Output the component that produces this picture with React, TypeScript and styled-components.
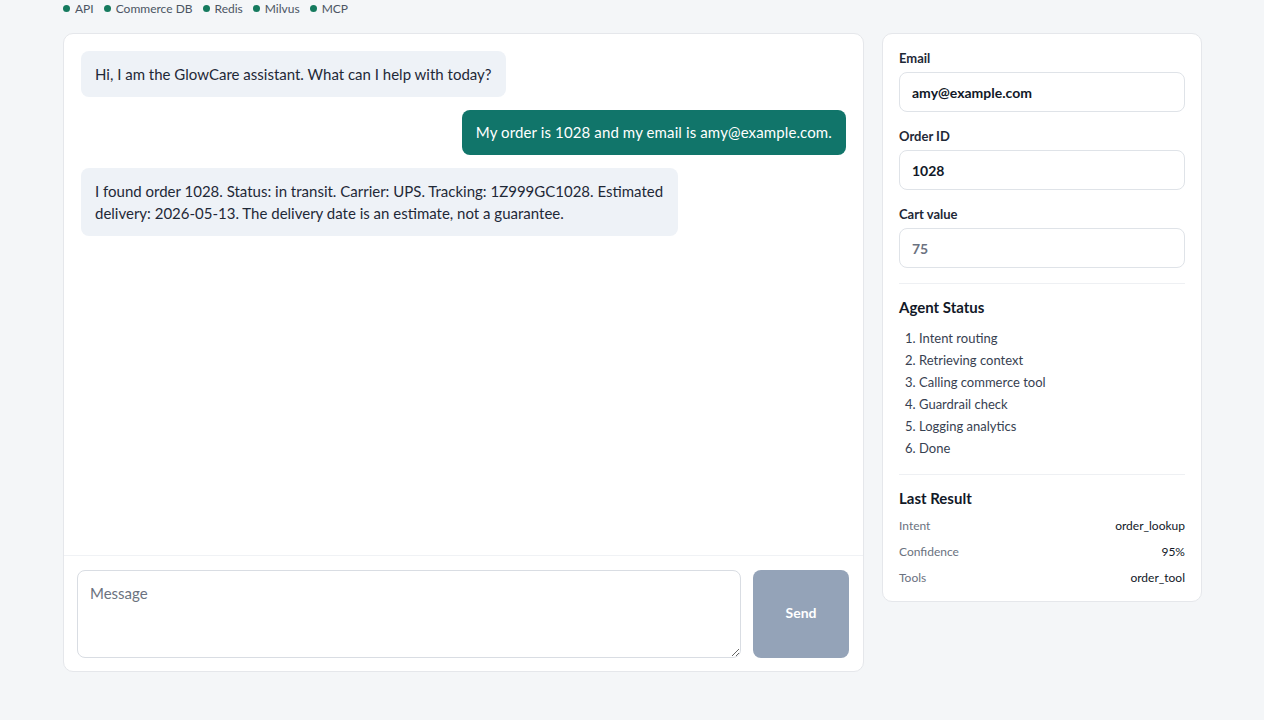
import React from "react";
import styled, { createGlobalStyle } from "styled-components";

const GlobalStyle = createGlobalStyle`
	html, body {
		margin: 0;
		padding: 0;
		background: #f4f6f8;
	}
	body {
		font-family: Lato, "Liberation Sans", sans-serif;
		color: #1f2937;
	}
	* {
		box-sizing: border-box;
	}
`;

const Page = styled.div`
	width: 1139px;
	margin: 0 62px 0 63px;
	padding-bottom: 48px;
`;

const ServiceBar = styled.div`
	display: flex;
	align-items: center;
	gap: 10px;
	height: 17px;
	margin-bottom: 16px;
`;

const Service = styled.span`
	display: flex;
	align-items: center;
	gap: 5px;
	font-size: 12px;
	color: #4b5563;
	&::before {
		content: "";
		width: 7px;
		height: 7px;
		border-radius: 50%;
		background: #157a5e;
	}
`;

const Layout = styled.div`
	display: grid;
	grid-template-columns: 1fr 320px;
	gap: 18px;
	align-items: start;
`;

const Card = styled.section`
	background: #fff;
	border: 1px solid #e5e7eb;
	border-radius: 10px;
`;

const ChatCard = styled(Card)`
	display: flex;
	flex-direction: column;
	height: 639px;
`;

const Messages = styled.div`
	flex: 1;
	display: flex;
	flex-direction: column;
	gap: 13px;
	padding: 17px;
`;

const Bubble = styled.div<{ $mine?: boolean }>`
	align-self: ${(p) => (p.$mine ? "flex-end" : "flex-start")};
	max-width: 78%;
	padding: 11.5px 14px;
	border-radius: 8px;
	font-size: 15px;
	line-height: 22.5px;
	letter-spacing: ${(p) => (p.$mine ? "0.12px" : "0")};
	background: ${(p) => (p.$mine ? "#11756a" : "#eef2f7")};
	color: ${(p) => (p.$mine ? "#fff" : "#1f2937")};
`;

const Composer = styled.div`
	display: flex;
	gap: 12px;
	padding: 14px 14px 13px 13px;
	border-top: 1px solid #f0f2f5;
`;

const MessageInput = styled.textarea`
	flex: 1;
	height: 88px;
	resize: vertical;
	padding: 12px;
	border: 1px solid #d9dde3;
	border-radius: 8px;
	font-family: inherit;
	font-size: 15px;
	line-height: 20px;
	color: #1f2937;
	&::placeholder {
		color: #6b7280;
	}
`;

const SendButton = styled.button`
	width: 96px;
	height: 88px;
	padding: 0 0 3px;
	border: none;
	border-radius: 8px;
	background: #94a3b8;
	color: #fff;
	font-family: inherit;
	font-size: 14px;
	font-weight: 700;
	cursor: not-allowed;
`;

const SidePanel = styled(Card)`
	padding: 16px 16px 11px;
`;

const Field = styled.label`
	display: flex;
	flex-direction: column;
	gap: 6px;
	margin-bottom: 16px;
	font-size: 13px;
	line-height: 16px;
	font-weight: 700;
	color: #1f2937;
	&:last-of-type {
		margin-bottom: 15px;
	}
`;

const TextInput = styled.input<{ $muted?: boolean }>`
	height: 40px;
	padding: 0 12px;
	border: 1px solid #dfe3e8;
	border-radius: 8px;
	font-family: inherit;
	font-size: 14px;
	font-weight: 700;
	color: ${(p) => (p.$muted ? "#6b7280" : "#111827")};
`;

const Divider = styled.hr`
	border: none;
	border-top: 1px solid #eef0f3;
	margin: 0 0 14px;
`;

const Heading = styled.h3<{ $gap: number }>`
	margin: 0 0 ${(p) => p.$gap}px;
	font-size: 15px;
	line-height: 18px;
	font-weight: 700;
	color: #111827;
`;

const Steps = styled.ol`
	margin: 0 0 15px;
	padding-left: 20px;
	font-size: 13px;
	line-height: 22px;
	color: #374151;
`;

const ResultRow = styled.div`
	display: flex;
	justify-content: space-between;
	align-items: center;
	height: 26px;
	font-size: 12px;
`;

const ResultKey = styled.span`
	color: #6b7280;
`;

const ResultValue = styled.span`
	color: #111827;
`;

const services = ["API", "Commerce DB", "Redis", "Milvus", "MCP"];

const steps = [
	"Intent routing",
	"Retrieving context",
	"Calling commerce tool",
	"Guardrail check",
	"Logging analytics",
	"Done",
];

const results = [
	["Intent", "order_lookup"],
	["Confidence", "95%"],
	["Tools", "order_tool"],
];

export default function App() {
	return (
		<>
			<GlobalStyle />
			<Page>
				<ServiceBar>
					{services.map((s) => (
						<Service key={s}>{s}</Service>
					))}
				</ServiceBar>
				<Layout>
					<ChatCard>
						<Messages>
							<Bubble>Hi, I am the GlowCare assistant. What can I help with today?</Bubble>
							<Bubble $mine>My order is 1028 and my email is amy@example.com.</Bubble>
							<Bubble>
								I found order 1028. Status: in transit. Carrier: UPS. Tracking: 1Z999GC1028. Estimated
								delivery: 2026-05-13. The delivery date is an estimate, not a guarantee.
							</Bubble>
						</Messages>
						<Composer>
							<MessageInput placeholder='Message' />
							<SendButton disabled>Send</SendButton>
						</Composer>
					</ChatCard>
					<SidePanel>
						<Field>
							Email
							<TextInput defaultValue='amy@example.com' />
						</Field>
						<Field>
							Order ID
							<TextInput defaultValue='1028' />
						</Field>
						<Field>
							Cart value
							<TextInput $muted defaultValue='75' />
						</Field>
						<Divider />
						<Heading $gap={11}>Agent Status</Heading>
						<Steps>
							{steps.map((s) => (
								<li key={s}>{s}</li>
							))}
						</Steps>
						<Divider />
						<Heading $gap={5}>Last Result</Heading>
						{results.map(([k, v]) => (
							<ResultRow key={k}>
								<ResultKey>{k}</ResultKey>
								<ResultValue>{v}</ResultValue>
							</ResultRow>
						))}
					</SidePanel>
				</Layout>
			</Page>
		</>
	);
}
